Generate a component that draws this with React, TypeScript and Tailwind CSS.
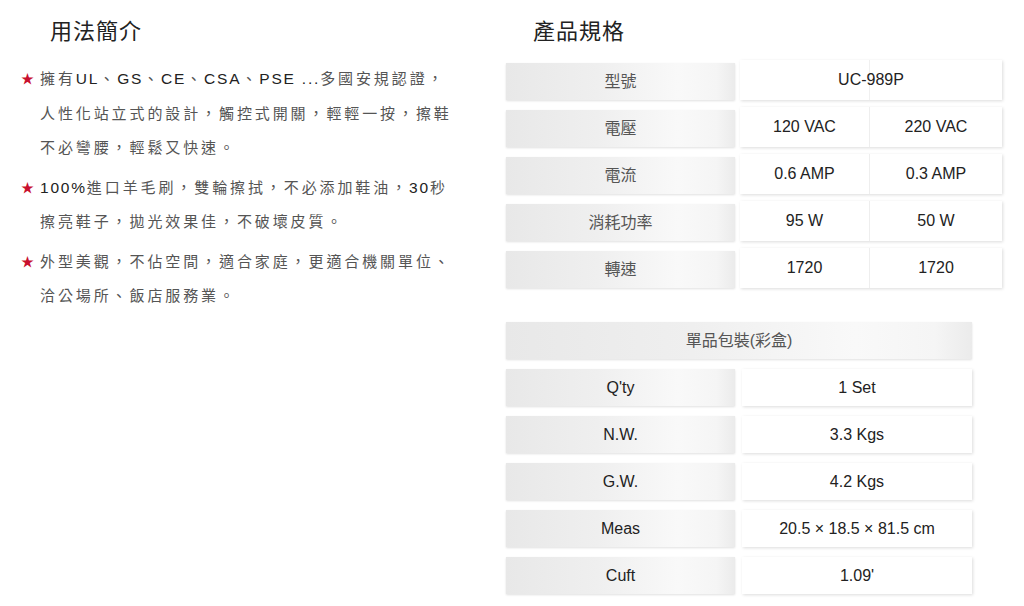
import React from "react";

const cjk = { fontFamily: '"Liberation Sans", "Noto Sans CJK TC", sans-serif' };
const heading = { fontFamily: '"Noto Sans CJK TC", serif' };

const labelBg =
  "bg-[linear-gradient(to_right,#e8e8e8_0%,#efefef_40%,#f9f9f9_75%,#f5f5f5_92%,#ebebeb_100%)] shadow-[0_1px_2px_rgba(0,0,0,0.12)]";
const valueBg = "bg-white shadow-[1px_1px_3px_rgba(0,0,0,0.14)]";

function Bullet({ lines }: { lines: React.ReactNode[] }) {
  return (
    <div className="flex">
      <span className="w-[40px] shrink-0 pl-[21px] text-[#c8102e] text-[13px] leading-[34.5px]">★</span>
      <div className="text-[15px] leading-[34.5px] tracking-[2.9px] text-[#555]">
        {lines.map((l, i) => (
          <div key={i} className="whitespace-nowrap">
            {l}
          </div>
        ))}
      </div>
    </div>
  );
}

const B = ({ children }: { children: React.ReactNode }) => (
  <span className="text-[#222] text-[15.5px] tracking-[1.8px]">{children}</span>
);

function Row1({ label, a, b }: { label: string; a: string; b?: string }) {
  return (
    <div className="flex h-[37px] gap-[5px]">
      <div className={`w-[229px] flex items-center justify-center text-[#555] ${labelBg}`}>{label}</div>
      <div className={`w-[262px] flex -mt-[3px] h-[40px] ${valueBg}`}>
        {b === undefined ? (
          <div className="relative flex-1 flex items-center justify-center text-[#222]">
            <div className="absolute left-[129px] top-0 bottom-0 w-px bg-[#f0f0f0]" />
            <span className="relative">{a}</span>
          </div>
        ) : (
          <>
            <div className="w-[130px] flex items-center justify-center text-[#222] border-r border-[#eeeeee]">{a}</div>
            <div className="flex-1 flex items-center justify-center text-[#222]">{b}</div>
          </>
        )}
      </div>
    </div>
  );
}

function Row2({ label, value }: { label: string; value: string }) {
  return (
    <div className="flex h-[37px] gap-[7px]">
      <div className={`w-[229px] flex items-center justify-center text-[#222] ${labelBg}`}>{label}</div>
      <div className={`w-[230px] flex items-center justify-center text-[#222] ${valueBg}`}>{value}</div>
    </div>
  );
}

export default function App() {
  return (
    <div className="w-[1024px] h-[606px] bg-white flex overflow-hidden" style={cjk}>
      <div className="w-[506px] shrink-0">
        <h2 className="pl-[50px] pt-[13px] text-[22px] leading-[33px] text-[#222] tracking-[1px]" style={heading}>
          用法簡介
        </h2>
        <div className="mt-[16px] flex flex-col gap-[5px]">
          <Bullet
            lines={[
              <>
                擁有<B>UL</B>、<B>GS</B>、<B>CE</B>、<B>CSA</B>、<B>PSE ...</B>多國安規認證，
              </>,
              "人性化站立式的設計，觸控式開關，輕輕一按，擦鞋",
              "不必彎腰，輕鬆又快速。",
            ]}
          />
          <Bullet
            lines={[
              <>
                <B>100%</B>進口羊毛刷，雙輪擦拭，不必添加鞋油，<B>30</B>秒
              </>,
              "擦亮鞋子，拋光效果佳，不破壞皮質。",
            ]}
          />
          <Bullet lines={["外型美觀，不佔空間，適合家庭，更適合機關單位、", "洽公場所、飯店服務業。"]} />
        </div>
      </div>
      <div className="flex-1 text-[16px]">
        <h2 className="pl-[27px] pt-[13px] text-[22px] leading-[33px] text-[#222] tracking-[1px]" style={heading}>
          產品規格
        </h2>
        <div className="mt-[17px] flex flex-col gap-[10px]">
          <Row1 label="型號" a="UC-989P" />
          <Row1 label="電壓" a="120 VAC" b="220 VAC" />
          <Row1 label="電流" a="0.6 AMP" b="0.3 AMP" />
          <Row1 label="消耗功率" a="95 W" b="50 W" />
          <Row1 label="轉速" a="1720" b="1720" />
        </div>
        <div className="mt-[34px] flex flex-col gap-[10px]">
          <div className={`w-[466px] h-[37px] flex items-center justify-center text-[#555] ${labelBg}`}>
            單品包裝(彩盒)
          </div>
          <Row2 label="Q'ty" value="1 Set" />
          <Row2 label="N.W." value="3.3 Kgs" />
          <Row2 label="G.W." value="4.2 Kgs" />
          <Row2 label="Meas" value="20.5 × 18.5 × 81.5 cm" />
          <Row2 label="Cuft" value="1.09'" />
        </div>
      </div>
    </div>
  );
}
